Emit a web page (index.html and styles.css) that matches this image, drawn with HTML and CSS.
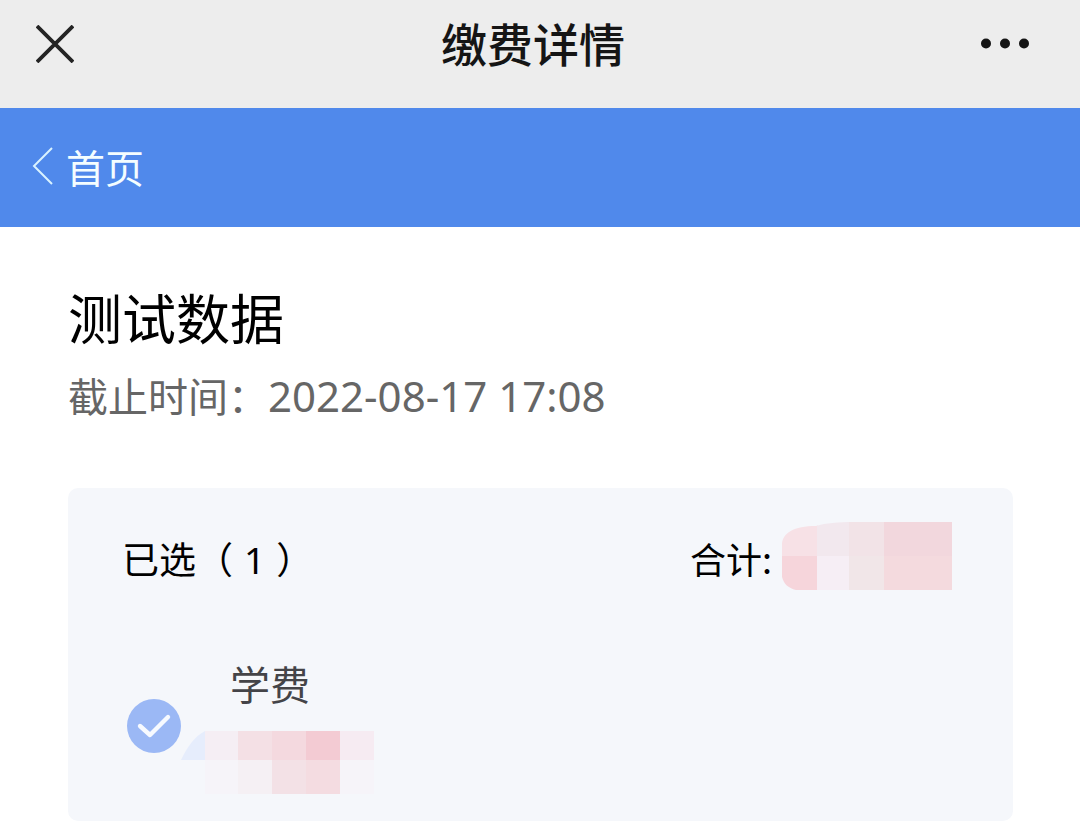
FILE: index.html
```html
<!DOCTYPE html>
<html lang="zh-CN">
<head>
  <meta charset="UTF-8">
  <meta name="viewport" content="width=device-width, initial-scale=1.0">
  <title>缴费详情</title>
  <link rel="stylesheet" href="styles.css">
</head>
<body>
  <header class="title-bar">
    <button type="button" class="icon-button" aria-label="关闭">
      <svg width="38" height="38" viewBox="0 0 38 38" fill="none">
        <path d="M1 1L37 37M37 1L1 37" stroke="#242424" stroke-width="3.8"/>
      </svg>
    </button>
    <h1>缴费详情</h1>
    <button type="button" class="icon-button icon-more" aria-label="更多">
      <svg width="50" height="12" viewBox="0 0 50 12" fill="#151515">
        <circle cx="6" cy="5.5" r="5"/>
        <circle cx="25" cy="5.5" r="5"/>
        <circle cx="44" cy="5.5" r="5"/>
      </svg>
    </button>
  </header>

  <nav class="nav-bar">
    <a href="#" class="nav-back">
      <svg width="22" height="38" viewBox="0 0 22 38" fill="none">
        <path d="M20 1L2 19L20 37" stroke="#d9f3ff" stroke-width="2"/>
      </svg>
      首页
    </a>
  </nav>

  <main class="content">
    <h2>测试数据</h2>
    <p class="deadline">截止时间：<time datetime="2022-08-17T17:08">2022-08-17 17:08</time></p>

    <section class="card">
      <div class="summary">
        <span class="selected">已选（<span class="count">1</span>）</span>
        <div class="total">
          <span>合计:</span>
          <svg width="170" height="68" viewBox="0 0 170 68">
            <clipPath id="totalShape">
              <path d="M0 23C0 11 12 4 34 4C44 1 56 0 72 0H170V68H14C6 66 2 62 0 55Z"/>
            </clipPath>
            <g clip-path="url(#totalShape)">
              <rect width="36" height="34" fill="#f7e1e6"/>
              <rect y="34" width="36" height="34" fill="#f6d5db"/>
              <rect x="35" width="34" height="34" fill="#f2e8ee"/>
              <rect x="35" y="34" width="34" height="34" fill="#f6eef5"/>
              <rect x="67" width="37" height="34" fill="#f2e3e7"/>
              <rect x="67" y="34" width="37" height="34" fill="#f1e6e8"/>
              <rect x="102" width="68" height="34" fill="#f2d7dd"/>
              <rect x="102" y="34" width="68" height="34" fill="#f4dade"/>
            </g>
          </svg>
        </div>
      </div>

      <ul class="items">
        <li class="item">
          <span class="check">
            <input type="checkbox" id="tuition" checked>
            <svg width="54" height="54" viewBox="0 0 54 54" fill="none">
              <path d="M13 27L23 36L41 18" stroke="#f7faff" stroke-width="4.4" stroke-linecap="round" stroke-linejoin="round"/>
            </svg>
          </span>
          <div class="item-body">
            <label for="tuition">学费</label>
            <svg width="193" height="64" viewBox="0 0 193 64">
              <path d="M0 29C6 16 14 5 24 0V29Z" fill="#e6edfc"/>
              <rect x="24" width="34" height="29" fill="#f5eef4"/>
              <rect x="57" width="35" height="29" fill="#f4e0e5"/>
              <rect x="91" width="34" height="29" fill="#f4d9df"/>
              <rect x="125" width="34" height="29" fill="#f3cbd3"/>
              <rect x="159" width="34" height="29" fill="#f6ebf2"/>
              <rect x="24" y="29" width="34" height="34" fill="#f6f4f9"/>
              <rect x="57" y="29" width="35" height="34" fill="#f5f0f4"/>
              <rect x="91" y="29" width="34" height="34" fill="#f3e1e6"/>
              <rect x="125" y="29" width="34" height="34" fill="#f4dce1"/>
              <rect x="159" y="29" width="34" height="34" fill="#f6f4f9"/>
            </svg>
          </div>
        </li>
      </ul>
    </section>
  </main>
</body>
</html>
```

FILE: styles.css
```css
* {
  margin: 0;
  padding: 0;
  box-sizing: border-box;
}

body {
  font-family: "Noto Sans CJK SC", sans-serif;
  background: #fff;
  color: #000;
}

svg {
  display: block;
}

.title-bar {
  display: grid;
  grid-template-columns: 1fr auto 1fr;
  align-items: center;
  height: 108px;
  padding: 0 50px 20px 36px;
  background: #ededed;
}

.title-bar h1 {
  padding-bottom: 4px;
  font-size: 46px;
  font-weight: 500;
  line-height: 60px;
  color: #151515;
}

.icon-button {
  justify-self: start;
  background: none;
  border: none;
  cursor: pointer;
}

.icon-more {
  justify-self: end;
}

.nav-bar {
  padding: 28px 32px 31px;
  background: #5089eb;
}

.nav-back {
  display: inline-flex;
  align-items: center;
  gap: 12px;
  font-size: 39px;
  line-height: 60px;
  color: #f4fdff;
  text-decoration: none;
  vertical-align: top;
}

.content {
  padding: 54px 67px 20px 68px;
}

.content h2 {
  font-size: 54px;
  font-weight: 400;
  line-height: 72px;
}

.deadline {
  margin-top: 12px;
  font-size: 40px;
  line-height: 60px;
  color: #666;
}

.deadline time {
  font-family: "Noto Sans", sans-serif;
  font-size: 42px;
}

.card {
  margin-top: 62px;
  padding: 34px 61px 26px 54px;
  background: #f5f7fb;
  border-radius: 10px;
}

.summary,
.total {
  display: flex;
  align-items: center;
  justify-content: space-between;
}

.selected {
  padding-top: 4px;
  font-size: 37px;
}

.count {
  padding: 0 11px;
  font-family: "Noto Sans", sans-serif;
}

.total {
  gap: 10px;
  font-size: 36px;
}

.total span {
  padding-top: 4px;
}

.items {
  margin-top: 67px;
  list-style: none;
}

.item {
  display: flex;
  align-items: center;
  padding-left: 5px;
}

.check {
  display: grid;
}

.check input,
.check svg {
  grid-area: 1 / 1;
}

.check input {
  appearance: none;
  width: 54px;
  height: 54px;
  border-radius: 50%;
  background: #9bb8f5;
}

.check input:not(:checked) {
  background: #d5dae6;
}

.check svg {
  pointer-events: none;
}

.item-body {
  display: flex;
  flex-direction: column;
  gap: 22px;
}

.item-body label {
  padding-left: 49px;
  font-size: 40px;
  line-height: 52px;
  color: #444448;
}
```
